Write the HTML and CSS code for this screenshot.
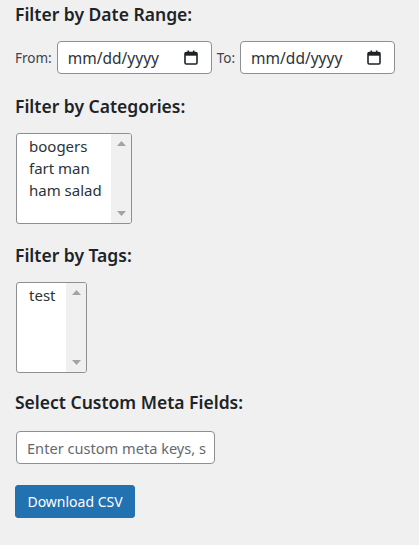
FILE: index.html
```html
<!DOCTYPE html>
<html>
<head>
<meta charset="utf-8">
<link rel="stylesheet" href="styles.css">
</head>
<body>
<div class="page">
  <h2 class="title t1">Filter by Date Range:</h2>
  <div class="date-row">
    <span class="lbl">From:</span>
    <div class="date-input"><span class="ph">mm/dd/yyyy</span>
      <svg class="cal" width="14" height="15" viewBox="0 0 14 15"><rect x="1" y="2.5" width="12" height="11.5" rx="1.2" fill="none" stroke="#1d2327" stroke-width="1.6"/><rect x="1" y="2.5" width="12" height="3.2" fill="#1d2327"/><rect x="3.5" y="0.5" width="1.6" height="3" fill="#1d2327"/><rect x="8.9" y="0.5" width="1.6" height="3" fill="#1d2327"/></svg>
    </div>
    <span class="lbl">To:</span>
    <div class="date-input"><span class="ph">mm/dd/yyyy</span>
      <svg class="cal" width="14" height="15" viewBox="0 0 14 15"><rect x="1" y="2.5" width="12" height="11.5" rx="1.2" fill="none" stroke="#1d2327" stroke-width="1.6"/><rect x="1" y="2.5" width="12" height="3.2" fill="#1d2327"/><rect x="3.5" y="0.5" width="1.6" height="3" fill="#1d2327"/><rect x="8.9" y="0.5" width="1.6" height="3" fill="#1d2327"/></svg>
    </div>
  </div>

  <h2 class="title t2">Filter by Categories:</h2>
  <div class="listbox cats">
    <ul class="opts">
      <li>boogers</li>
      <li>fart man</li>
      <li>ham salad</li>
    </ul>
    <div class="sbar">
      <svg width="9" height="5" viewBox="0 0 9 5"><polygon points="0,5 9,5 4.5,0" fill="#a3a3a3"/></svg>
      <svg width="9" height="5" viewBox="0 0 9 5"><polygon points="0,0 9,0 4.5,5" fill="#a3a3a3"/></svg>
    </div>
  </div>

  <h2 class="title t3">Filter by Tags:</h2>
  <div class="listbox tags">
    <ul class="opts">
      <li>test</li>
    </ul>
    <div class="sbar">
      <svg width="9" height="5" viewBox="0 0 9 5"><polygon points="0,5 9,5 4.5,0" fill="#a3a3a3"/></svg>
      <svg width="9" height="5" viewBox="0 0 9 5"><polygon points="0,0 9,0 4.5,5" fill="#a3a3a3"/></svg>
    </div>
  </div>

  <h2 class="title t4">Select Custom Meta Fields:</h2>
  <div class="text-input"><span class="ph2">Enter custom meta keys, s</span></div>

  <button class="btn">Download CSV</button>
</div>
</body>
</html>
```
FILE: styles.css
```css
html, body {
  margin: 0;
  padding: 0;
  background: #f0f0f1;
}
body {
  font-family: "Noto Sans", "Open Sans", sans-serif;
  color: #1d2327;
}
.page {
  padding: 0 15px;
  display: flex;
  flex-direction: column;
  align-items: flex-start;
}
.title {
  font-size: 17.5px;
  font-weight: 600;
  line-height: 22px;
  margin: 0;
  color: #1d2327;
}
.t1 { margin-top: 3px; }
.date-row {
  display: flex;
  align-items: center;
  margin-top: 16px;
  gap: 5px;
}
.lbl {
  font-size: 13.5px;
  color: #3c434a;
}
.date-input {
  width: 155px;
  height: 33px;
  box-sizing: border-box;
  border: 1px solid #8c8f94;
  border-radius: 4px;
  background: #fff;
  display: flex;
  align-items: center;
  justify-content: space-between;
  padding: 0 13px 0 10px;
}
.ph {
  font-size: 15.5px;
  color: #2c3338;
}
.t2 { margin-top: 21px; }
.listbox {
  display: flex;
  box-sizing: border-box;
  border: 1px solid #8c8f94;
  border-radius: 3px;
  background: #fff;
  height: 91px;
  margin-left: 1px;
  overflow: hidden;
}
.cats { width: 116px; margin-top: 16px; }
.tags { width: 71px; margin-top: 16px; }
.opts {
  list-style: none;
  margin: 0;
  padding: 1px 0 0 12px;
  flex: 1;
  font-size: 15px;
  line-height: 22px;
  color: #2c3338;
}
.sbar {
  width: 20px;
  background: #f0f0f0;
  display: flex;
  flex-direction: column;
  justify-content: space-between;
  align-items: center;
  padding: 7px 0 7px;
  box-sizing: border-box;
}
.t3 { margin-top: 20px; }
.t4 { margin-top: 18px; }
.text-input {
  margin-top: 18px;
  margin-left: 1px;
  width: 199px;
  height: 33px;
  box-sizing: border-box;
  border: 1px solid #8c8f94;
  border-radius: 4px;
  background: #fff;
  display: flex;
  align-items: center;
  padding-left: 10px;
  overflow: hidden;
  white-space: nowrap;
}
.ph2 {
  font-size: 14.6px;
  color: #646970;
}
.btn {
  margin-top: 21px;
  width: 120px;
  height: 33px;
  background: #2271b1;
  border: 1px solid #2271b1;
  border-radius: 3px;
  color: #fff;
  font-family: inherit;
  font-size: 14px;
  padding: 0;
}
```
